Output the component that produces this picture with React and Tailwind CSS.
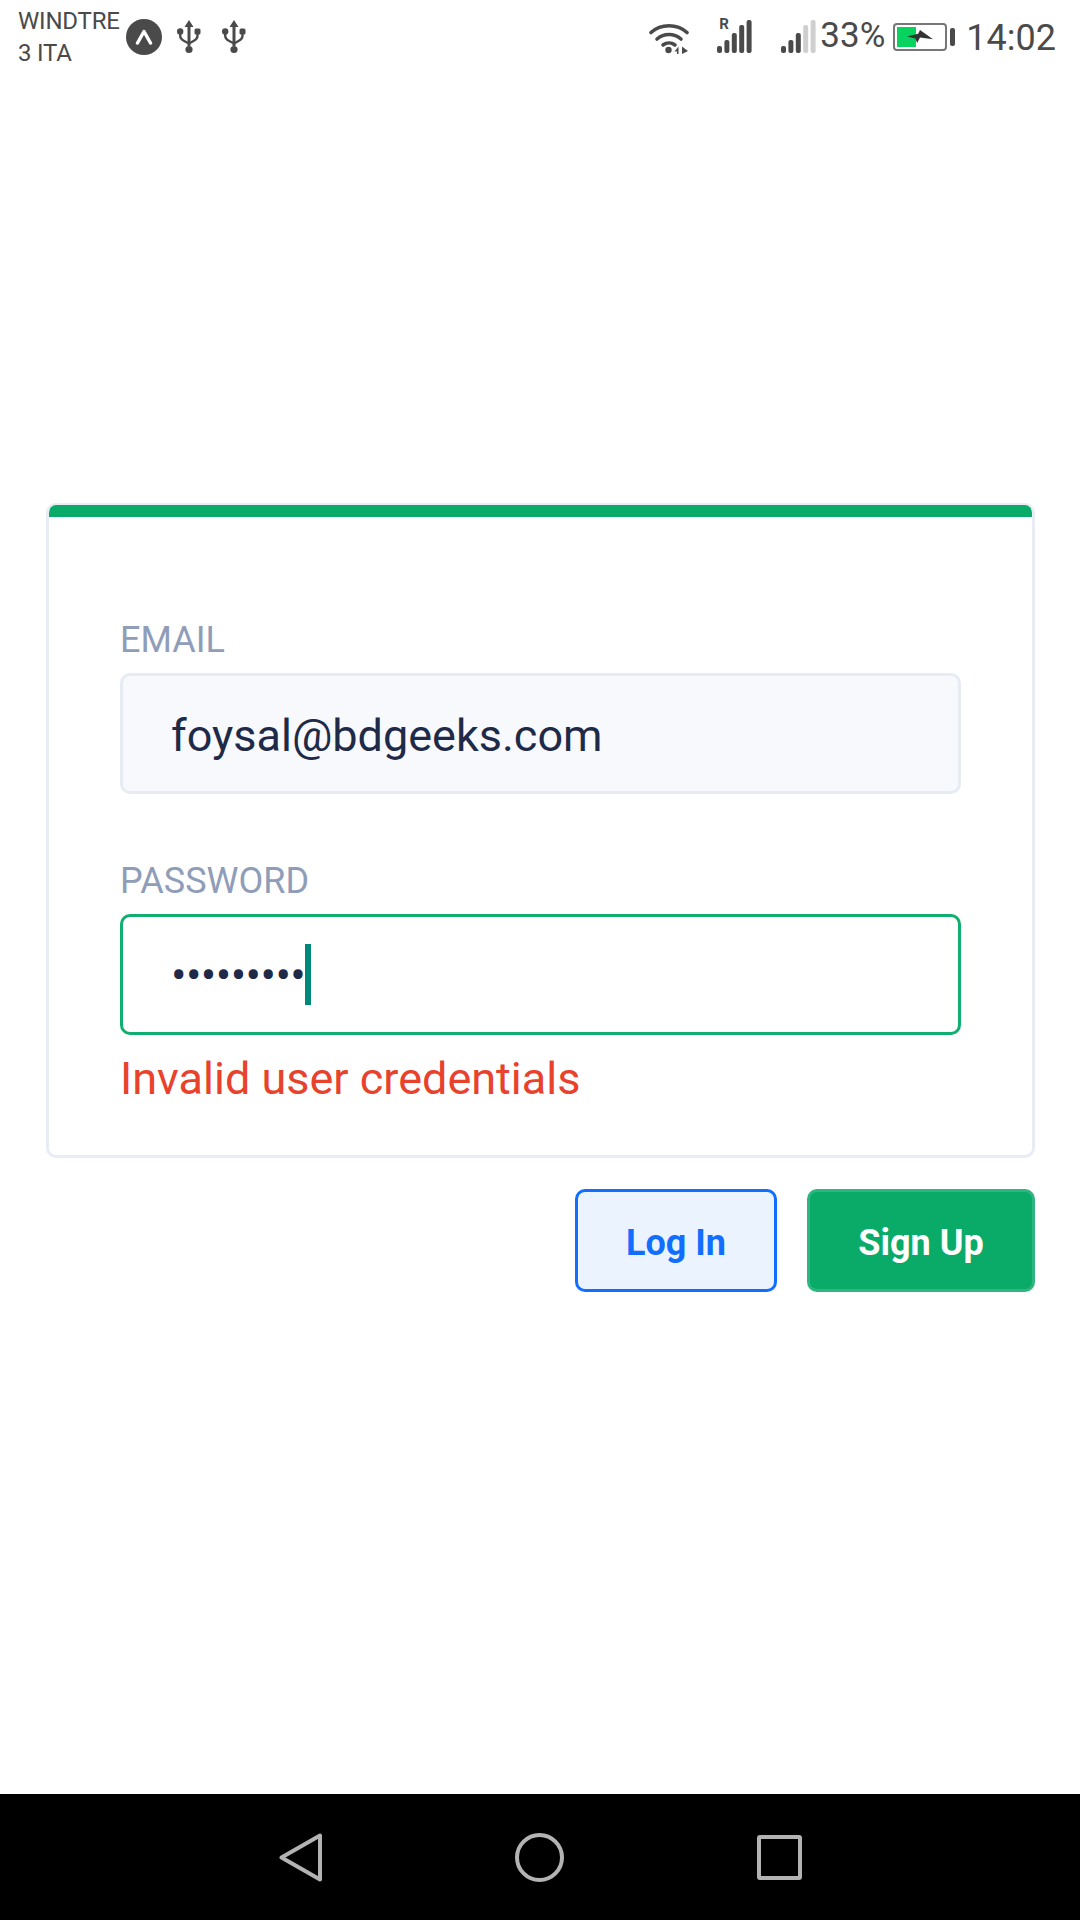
const UsbIcon = () => (
  <svg width="24" height="34" viewBox="0 0 24 34" fill="#4a4a4a">
    <path d="M12 0l4.5 7h-3v19h-3V7h-3z" />
    <circle cx="12" cy="29.5" r="3.6" />
    <circle cx="3.2" cy="11.5" r="3.2" />
    <rect x="17.5" y="8.5" width="6" height="6" rx="1.5" />
    <path d="M3.2 12v3.5c0 3 2 4.5 4 5.5l4.8 2.5M20.5 12v3.5c0 3-2 4.5-4 5.5L12 23.5" fill="none" stroke="#4a4a4a" strokeWidth="2.4" />
  </svg>
);

const WifiIcon = () => (
  <svg width="40" height="33" viewBox="0 0 40 33" fill="none" stroke="#4a4a4a" strokeLinecap="round">
    <path d="M2 11.5C12 2.5 28 2.5 38 11.5" strokeWidth="3.6" />
    <path d="M8 18c7-6 17-6 24 0" strokeWidth="3.6" />
    <path d="M14 24c3.5-2.6 8.5-2.6 12 0" strokeWidth="3.6" />
    <circle cx="19.5" cy="29" r="3.2" fill="#4a4a4a" stroke="none" />
    <path d="M25.5 30.5l4-5v8h-1.5v-3zM33 25.5l6 4.5-6 3z" fill="#4a4a4a" stroke="none" />
  </svg>
);

const Bars = ({ bars }) => (
  <svg width="36" height="34" viewBox="0 0 36 34">
    {bars.map((b, i) => (
      <rect key={i} x={i * 7.4} y={33 - b.h} width="5" height={b.h} rx="2" fill={b.c} />
    ))}
  </svg>
);

const Field = ({ label, children, className }) => (
  <div className={className}>
    <div className="text-[36px] leading-[40px] text-[#8f9db8]">{label}</div>
    {children}
  </div>
);

export default function App() {
  const dark = "#4a4a4a";
  const off = "#cfcfcf";

  return (
    <div className="flex h-[1920px] w-[1080px] flex-col bg-white font-['Roboto',sans-serif]">
      {/* status bar */}
      <div className="flex h-[70px] items-start justify-between pl-[18px] pr-[24px] text-[#4a4a4a]">
        <div className="flex items-center pt-[5px]">
          <div className="w-[108px] text-[24px] leading-[32px] tracking-[-0.2px]">
            WINDTRE
            <br />3 ITA
          </div>
          <div className="ml-[0px] flex h-[36px] w-[36px] items-center justify-center rounded-full bg-[#4a4a4a]">
            <svg width="18" height="16" viewBox="0 0 18 16" fill="none" stroke="#fff" strokeWidth="3.4" strokeLinecap="round" strokeLinejoin="round">
              <path d="M2.5 14L9 2.5 15.5 14" />
            </svg>
          </div>
          <div className="ml-[15px] flex gap-[21px]">
            <UsbIcon />
            <UsbIcon />
          </div>
        </div>
        <div className="flex items-center pt-[18px]">
          <WifiIcon />
          <div className="relative ml-[28px]">
            <span className="absolute left-[2px] top-[-3px] text-[15px] font-bold leading-[14px]">R</span>
            <Bars bars={[{ h: 7, c: dark }, { h: 13, c: dark }, { h: 20, c: dark }, { h: 28, c: dark }, { h: 33, c: dark }]} />
          </div>
          <div className="ml-[28px]">
            <Bars bars={[{ h: 7, c: dark }, { h: 13, c: dark }, { h: 20, c: dark }, { h: 28, c: off }, { h: 33, c: off }]} />
          </div>
          <span className="ml-[3px] mb-[2px] text-[35px] leading-[34px]">33%</span>
          <div className="relative ml-[8px] flex h-[28px] w-[54px] items-center rounded-[4px] border-2 border-[#777] p-[2px]">
            <div className="h-[20px] w-[19px] bg-[#08d35f]" />
            <svg className="absolute left-[12px] top-[5px]" width="26" height="15" viewBox="0 0 28 16" fill="#333">
              <path d="M0 7l12-3 2-4 14 10-14-2-3 6-2-5z" />
            </svg>
          </div>
          <div className="ml-[3px] h-[18px] w-[5px] rounded-[2px] bg-[#4a4a4a]" />
          <span className="ml-[11px] mt-[2px] text-[36px] leading-[36px]">14:02</span>
        </div>
      </div>

      {/* login form */}
      <div className="flex-1 pl-[46px] pt-[433px]">
        <div className="h-[655px] w-[989px] overflow-hidden rounded-[10px] border-[3px] border-t-2 border-[#e8ecf5] bg-white">
          <div className="h-[12px] bg-[#0aab68]" />
          <div className="px-[71px] pt-[103px]">
            <Field label="EMAIL">
              <div className="mt-[13px] flex h-[121px] items-center rounded-[10px] border-[3px] border-[#e7ebf3] bg-[#f7f9fc] pl-[48px] pt-[4px] text-[45px] text-[#1f2a48]">
                foysal@bdgeeks.com
              </div>
            </Field>
            <Field label="PASSWORD" className="mt-[67px]">
              <div className="mt-[13px] flex h-[121px] items-center rounded-[10px] border-[3px] border-[#10ae6f] bg-white pl-[48px] text-[#1f2a48]">
                <span className="text-[46px] leading-[60px] tracking-[-0.6px]">•••••••••</span>
                <span className="h-[61px] w-[6px] bg-[#00897b]" />
              </div>
            </Field>
            <div className="mt-[14px] text-[45px] leading-[60px] text-[#e8412c]">Invalid user credentials</div>
          </div>
        </div>
        <div className="mt-[31px] flex w-[989px] justify-end gap-[30px]">
          <button className="h-[103px] w-[202px] rounded-[10px] border-[3px] border-[#126eff] bg-[#ebf3fe] pt-[4px] text-[36px] font-bold text-[#126eff]">
            Log In
          </button>
          <button className="h-[103px] w-[228px] rounded-[10px] border-[3px] border-[#2fb57f] bg-[#0aab68] pt-[4px] text-[36px] font-bold text-white">
            Sign Up
          </button>
        </div>
      </div>

      {/* nav bar */}
      <div className="flex h-[126px] items-center gap-[193px] bg-black pl-[279px]">
        <svg width="43" height="49" viewBox="0 0 43 49" fill="none" stroke="#b3b3b3" strokeWidth="4" strokeLinejoin="round">
          <path d="M41 2.5V46.5L2.5 24.5z" />
        </svg>
        <svg width="49" height="49" viewBox="0 0 49 49" fill="none" stroke="#b3b3b3" strokeWidth="4">
          <circle cx="24.5" cy="24.5" r="22.5" />
        </svg>
        <svg width="45" height="45" viewBox="0 0 45 45" fill="none" stroke="#b3b3b3" strokeWidth="4" strokeLinejoin="round">
          <rect x="2" y="2" width="41" height="41" rx="1" />
        </svg>
      </div>
    </div>
  );
}
